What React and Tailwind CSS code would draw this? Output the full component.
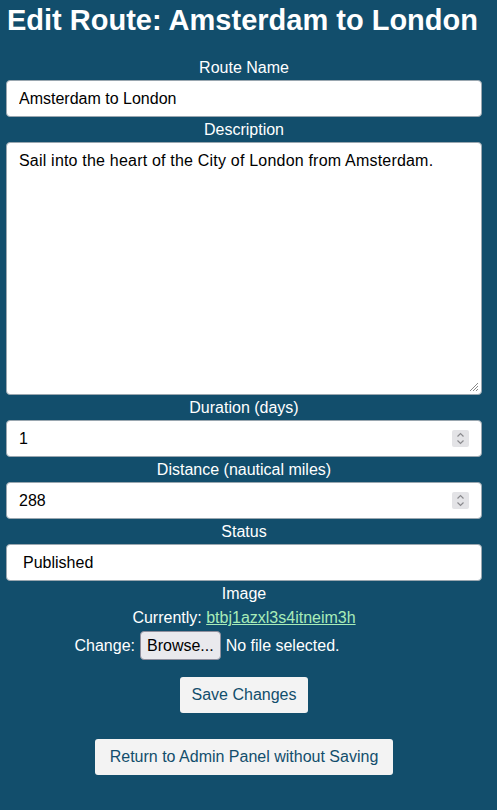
import React from "react";

const font = { fontFamily: '"Liberation Sans", Arial, sans-serif' };

function Label({ children }) {
  return <div className="text-center text-white text-base leading-5">{children}</div>;
}

function Spinner() {
  return (
    <span className="absolute right-[13px] top-[10px] w-[17px] h-[17px] bg-[#e3e3e6] rounded-[2px] flex items-center justify-center">
      <svg width="9" height="13" viewBox="0 0 9 13" fill="none" stroke="#8a8a8e" strokeWidth="1.2">
        <path d="M1.5 4.5 L4.5 1.5 L7.5 4.5" />
        <path d="M1.5 8.5 L4.5 11.5 L7.5 8.5" />
      </svg>
    </span>
  );
}

function Field({ label, value, number }) {
  return (
    <div className="mb-[3px]">
      <Label>{label}</Label>
      <div className="relative mt-0.5">
        <input
          readOnly
          value={value}
          className="w-full h-[37px] bg-white border border-[#9aa7b0] rounded-[4px] px-3 text-base text-black outline-none"
          style={font}
        />
        {number && <Spinner />}
      </div>
    </div>
  );
}

export default function App() {
  return (
    <div className="min-h-[810px] bg-[#124e6c]" style={font}>
      <div className="w-[488px] px-[6px]">
        <h1 className="text-[29px] leading-[40px] font-bold text-white pl-px whitespace-nowrap">
          Edit Route: Amsterdam to London
        </h1>
        <div className="mt-[18px]">
          <Field label="Route Name" value="Amsterdam to London" />
          <div className="mb-[3px]">
            <Label>Description</Label>
            <div className="relative mt-0.5">
              <textarea
                readOnly
                value="Sail into the heart of the City of London from Amsterdam."
                className="block w-full h-[253px] bg-white border border-[#9aa7b0] rounded-[4px] px-3 py-2 text-base leading-5 text-black outline-none resize-none tracking-[0.2px]"
                style={font}
              />
              <svg className="absolute right-[3px] bottom-[3px]" width="11" height="11" viewBox="0 0 11 11" stroke="#8a8a8a" strokeWidth="1">
                <path d="M10 2 L2 10 M10 5 L5 10 M10 8 L8 10" />
              </svg>
            </div>
          </div>
          <Field label="Duration (days)" value="1" number />
          <Field label="Distance (nautical miles)" value="288" number />
          <div>
            <Label>Status</Label>
            <div className="mt-0.5 h-[37px] bg-white border border-[#9aa7b0] rounded-[4px] pl-4 flex items-center text-base text-black">
              Published
            </div>
          </div>
          <div className="mt-[3px] text-center text-white text-base leading-5">
            <div>Image</div>
            <div className="mt-1">
              Currently:{" "}
              <a href="#" className="text-[#a8ecb8] underline">btbj1azxl3s4itneim3h</a>
            </div>
            <div className="mt-[3px] flex items-center justify-center gap-[5px] pr-[74px]">
              <span>Change:</span>
              <span className="h-[29px] px-[6px] flex items-center bg-[#e9e9ed] border border-[#8f8f9d] rounded-[4px] text-black">
                Browse...
              </span>
              <span>No file selected.</span>
            </div>
          </div>
          <div className="mt-[17px] flex justify-center">
            <button className="h-[36px] px-3 bg-[#f3f3f3] rounded-[3px] text-[#124e6c] text-base">
              Save Changes
            </button>
          </div>
          <div className="mt-[26px] flex justify-center">
            <button className="h-[36px] px-[15px] bg-[#f3f3f3] rounded-[3px] text-[#124e6c] text-base">
              Return to Admin Panel without Saving
            </button>
          </div>
        </div>
      </div>
    </div>
  );
}
